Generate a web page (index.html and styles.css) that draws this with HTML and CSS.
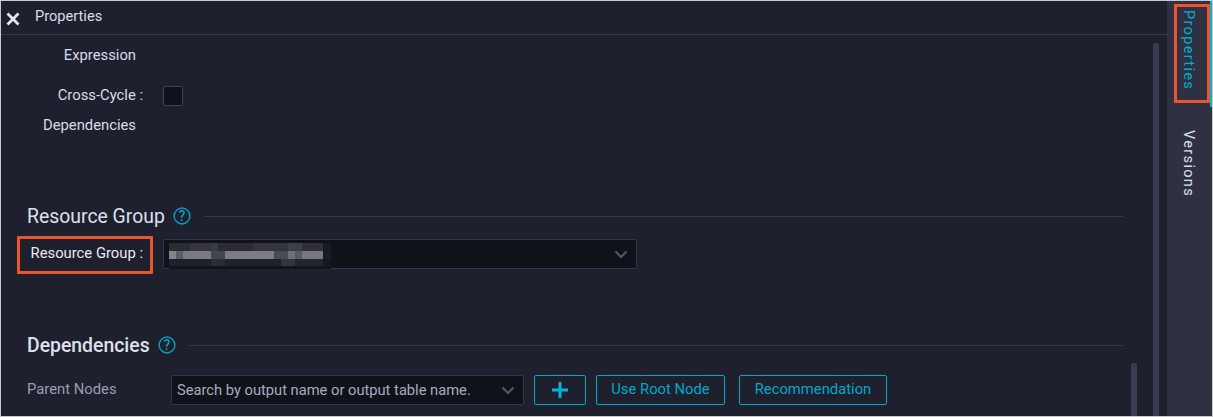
FILE: index.html
```html
<!DOCTYPE html>
<html lang="en">
<head>
<meta charset="utf-8">
<title>Properties</title>
<link rel="stylesheet" href="styles.css">
</head>
<body>
<div class="frame">
  <main class="panel">
    <header class="panel-head">
      <svg class="close" width="14" height="14" viewBox="0 0 14 14"><path d="M1.5 1.5l11 11M12.5 1.5l-11 11" stroke="#e6e8f2" stroke-width="2.8" fill="none"/></svg>
      <span class="panel-title">Properties</span>
    </header>
    <div class="content">
      <div class="label-plain expr">Expression</div>
      <div class="row cross">
        <span class="label">Cross-Cycle :</span>
        <span class="checkbox"></span>
      </div>
      <div class="label-plain deps">Dependencies</div>

      <div class="section-head rg-head">
        <h2>Resource Group</h2>
        <svg class="help" width="18" height="18" viewBox="0 0 18 18"><circle cx="9" cy="9" r="7.9" stroke="#0a9cbc" stroke-width="1.5" fill="none"/><text x="9" y="13.7" text-anchor="middle" class="help-q">?</text></svg>
        <span class="rule"></span>
      </div>
      <div class="row rg-row">
        <span class="label rg-label">Resource Group :</span>
        <div class="select rg-select">
          <span class="blurred"></span>
          <svg class="chev" width="14" height="9" viewBox="0 0 14 9"><path d="M1.5 1.5L7 7l5.5-5.5" stroke="#555770" stroke-width="2" fill="none"/></svg>
        </div>
      </div>

      <div class="section-head dep-head">
        <h2>Dependencies</h2>
        <svg class="help" width="18" height="18" viewBox="0 0 18 18"><circle cx="9" cy="9" r="7.9" stroke="#0a9cbc" stroke-width="1.5" fill="none"/><text x="9" y="13.7" text-anchor="middle" class="help-q">?</text></svg>
        <span class="rule"></span>
      </div>
      <div class="parent-row">
        <span class="parent-label">Parent Nodes</span>
        <div class="select search">
          <span class="placeholder">Search by output name or output table name.</span>
          <svg class="chev" width="14" height="9" viewBox="0 0 14 9"><path d="M1.5 1.5L7 7l5.5-5.5" stroke="#555770" stroke-width="2" fill="none"/></svg>
        </div>
        <button class="btn plus"><svg width="16" height="16" viewBox="0 0 16 16"><path d="M8 0v16M0 8h16" stroke="#00b7d8" stroke-width="3" fill="none"/></svg></button>
        <button class="btn root">Use Root Node</button>
        <button class="btn rec">Recommendation</button>
      </div>
    </div>
    <span class="scroll scroll-outer"></span>
    <span class="scroll scroll-inner"></span>
    <span class="mark mark-rg"></span>
  </main>
  <aside class="tabs">
    <div class="tab tab-active">Properties</div>
    <div class="tab tab-versions">Versions</div>
    <span class="mark mark-tab"></span>
  </aside>
</div>
</body>
</html>
```
FILE: styles.css
```css
* { box-sizing: border-box; }
html, body { margin: 0; padding: 0; }
body {
  width: 1213px;
  height: 417px;
  overflow: hidden;
  background: #c9c9c9;
  font-family: Roboto, "Liberation Sans", sans-serif;
  font-size: 14.8px;
}
.frame {
  display: flex;
  height: 415px;
  margin: 1px 1px 0 1px;
}
.panel {
  position: relative;
  flex: 1;
  min-width: 0;
  background: #1e202d;
  overflow: hidden;
}
.panel-head {
  display: flex;
  align-items: center;
  height: 34px;
  border-bottom: 1px solid #373850;
  padding-left: 5px;
  color: #d9dcea;
}
.close { margin-top: 2px; }
.panel-title { margin-left: 15px; margin-top: -4px; font-size: 14.6px; }
.content { padding-left: 26px; padding-right: 44px; color: #d9dcea; }
.label-plain { text-align: right; width: 109px; line-height: 20px; }
.expr { margin-top: 10px; }
.row { display: flex; align-items: center; }
.cross { margin-top: 20px; height: 22px; }
.label { width: 116px; text-align: right; white-space: nowrap; }
.cross .label { margin-top: -2px; }
.checkbox {
  width: 20px;
  height: 20px;
  margin-left: 20px;
  border: 1px solid #3f4160;
  border-radius: 2px;
  background: #10121a;
}
.deps { margin-top: 8px; }
.section-head { display: flex; align-items: center; }
.section-head h2 {
  margin: 0 0 -1px;
  padding-top: 1px;
  font-size: 19.4px;
  font-weight: 500;
  line-height: 24px;
  color: #dde0ee;
  white-space: nowrap;
}
.rg-head h2 { font-weight: 400; }
.help { margin-left: 8px; flex: none; }
.help-q { font-size: 14px; font-weight: 500; fill: #0a9cbc; font-family: Roboto, sans-serif; }
.rule { flex: 1; height: 1px; background: #373850; margin-left: 13px; }
.rg-head { margin-top: 69px; }
.rg-row { margin-top: 11px; height: 30px; }
.rg-label { color: #e8eaf4; margin-top: -3px; }
.select {
  position: relative;
  display: flex;
  align-items: center;
  background: #10121a;
  border: 1px solid #34354d;
  border-radius: 2px;
}
.rg-select { width: 474px; height: 30px; margin-left: 20px; overflow: visible; }
.blurred {
  position: absolute;
  left: 5px;
  top: 3px;
  width: 162px;
  height: 26px;
  background:
    linear-gradient(90deg, #838389 0 7px, #5c5d63 7px 14px, #7a7a80 14px 42px, #44454d 42px 56px, #7c7c82 56px 105px, #4a4b53 105px 119px, #6f6f75 119px 126px, #5a5a61 126px 133px, #77777d 133px 154px, #1a1b24 154px 162px) 0 8px / 162px 8px no-repeat,
    linear-gradient(90deg, #2a2b35 0 21px, #34353f 21px 42px, #3a3b45 42px 49px, #2a2b35 49px 84px, #33343e 84px 119px, #3d3e48 119px 133px, #2e2f39 133px 154px, #191a23 154px 162px) 0 0 / 162px 8px no-repeat,
    linear-gradient(90deg, #1f2029 0 42px, #2b2c36 42px 56px, #1f2029 56px 112px, #33343e 112px 126px, #23242e 126px 154px, #15161e 154px 162px) 0 16px / 162px 7px no-repeat,
    linear-gradient(#12131b, #12131b) 0 23px / 162px 3px no-repeat;
}
.chev { position: absolute; right: 8px; top: 50%; margin-top: -4px; }
.dep-head { margin-top: 64px; }
.parent-row { display: flex; align-items: center; margin-top: 18px; height: 30px; }
.parent-label { width: 144px; flex: none; color: #9b9db2; padding-bottom: 2px; }
.search { width: 353px; height: 30px; border-color: #34354d; flex: none; }
.placeholder { margin-left: 5px; color: #a9abbd; white-space: nowrap; font-size: 14.7px; }
.btn {
  height: 30px;
  background: transparent;
  border: 1px solid #00a8c8;
  border-radius: 2px;
  color: #00a8c8;
  font: inherit;
  padding: 0;
  flex: none;
  display: flex;
  align-items: center;
  justify-content: center;
  padding-bottom: 2px;
}
.plus { width: 52px; margin-left: 10px; padding-bottom: 0; }
.root { width: 129px; margin-left: 10px; }
.rec { width: 148px; margin-left: 14px; }
.scroll {
  position: absolute;
  width: 6px;
  background: #3a3b52;
  border-radius: 2px 2px 0 0;
}
.scroll-outer { left: 1152px; top: 42px; bottom: 0; }
.scroll-inner { left: 1130px; top: 362px; bottom: 0; }
.mark {
  position: absolute;
  border: 3px solid #e8552f;
  border-radius: 1px;
  pointer-events: none;
}
.mark-rg { left: 16px; top: 235px; width: 136px; height: 38px; }
.tabs {
  position: relative;
  width: 45px;
  flex: none;
  background: #2f3142;
  color: #dde0ee;
}
.tab {
  writing-mode: vertical-rl;
  width: 45px;
  display: flex;
  align-items: flex-start;
  letter-spacing: 1.3px;
  padding-right: 13px;
  line-height: 20px;
  font-size: 14.6px;
}
.tab-active {
  height: 106px;
  padding-top: 9px;
  color: #00b0cf;
  border-right: 2px solid #00b7d8;
  padding-right: 11px;
}
.tab-versions { margin-top: 23px; }
.mark-tab { left: 7px; top: 3px; width: 36px; height: 99px; }
```
